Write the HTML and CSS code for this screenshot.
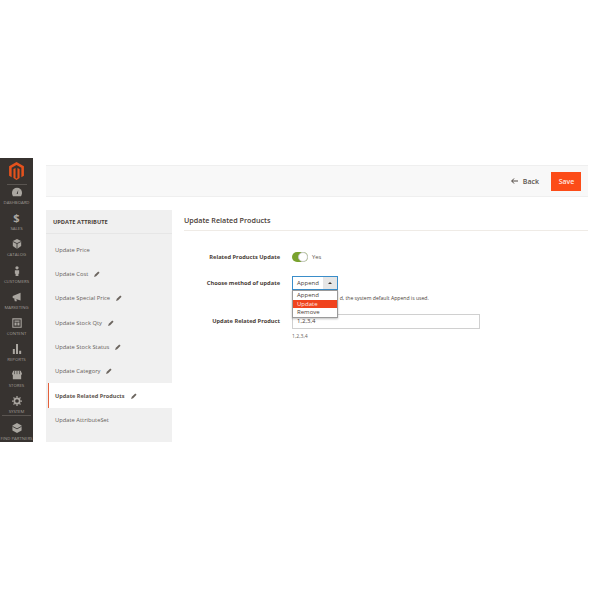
FILE: index.html
```html
<!DOCTYPE html>
<html lang="en">
<head>
<meta charset="utf-8">
<title>Update Related Products</title>
<link rel="stylesheet" href="styles.css">
</head>
<body>
<div class="app">
  <nav class="rail">
    <div class="logo"><svg width="15" height="18" viewBox="0 0 14 17"><path d="M7 0 L14 4 V13 L11.600 14.400 V5.400 L7 2.800 L2.400 5.400 V14.400 L0 13 V4 Z M6.100 5.600 V15 L7 15.600 L7.900 15 V5.600 L9.900 6.700 V15.200 L7 17 L4.100 15.200 V6.700 Z" fill="#e4521d"/></svg></div>
    <div class="rail-item first"><svg class="ri" viewBox="0 0 12 10"><path d="M6 0a6 6 0 0 0-6 6c0 1.500.5 3 1.200 4h9.600c.7-1 1.200-2.500 1.200-4a6 6 0 0 0-6-6z" fill="#aaa6a0"/><path d="M5.500 7 7.500 2.500 7 7.500z" fill="#33302e"/></svg><span>DASHBOARD</span></div>
    <div class="rail-item"><span class="glyph">$</span><span>SALES</span></div>
    <div class="rail-item"><svg class="ri" viewBox="0 0 12 12"><path d="M6 0 11 2.500 V8.500 L6 12 L1 8.500 V2.500Z" fill="#aaa6a0"/><path d="M1 3 6 5.500 11 3M6 5.500V12" stroke="#33302e" fill="none"/></svg><span>CATALOG</span></div>
    <div class="rail-item"><svg class="ri" viewBox="0 0 12 14"><circle cx="6" cy="2.500" r="2.300" fill="#aaa6a0"/><path d="M3 6h6v5H8v3H4v-3H3z" fill="#aaa6a0"/></svg><span>CUSTOMERS</span></div>
    <div class="rail-item"><svg class="ri" viewBox="0 0 14 12"><path d="M1 4.500 12 0V11L1 7.500z" fill="#aaa6a0"/><path d="M3 8h3l.8 4H4z" fill="#aaa6a0"/></svg><span>MARKETING</span></div>
    <div class="rail-item"><svg class="ri" viewBox="0 0 12 12"><path d="M1 1h10v10H1z" fill="none" stroke="#aaa6a0" stroke-width="1.300"/><path d="M3 3h6v1.500H3zM3 5.500h2.500V9H3zM6.500 5.500H9V9H6.500z" fill="#aaa6a0"/></svg><span>CONTENT</span></div>
    <div class="rail-item"><svg class="ri" viewBox="0 0 12 12"><path d="M1 6h2.400v6H1zM4.800 0h2.400v12H4.800zM8.600 8H11v4H8.600z" fill="#aaa6a0"/></svg><span>REPORTS</span></div>
    <div class="rail-item"><svg class="ri" viewBox="0 0 12 10"><path d="M1.500 0h9L12 3.500a1.500 1.500 0 0 1-1 1.400V10H1V4.900A1.500 1.500 0 0 1 0 3.500z" fill="#aaa6a0"/><path d="M3 0v4M6 0v4M9 0v4" stroke="#33302e" stroke-width=".7"/></svg><span>STORES</span></div>
    <div class="rail-item"><svg class="ri" viewBox="0 0 12 12"><circle cx="6" cy="6" r="3.200" fill="none" stroke="#aaa6a0" stroke-width="2"/><path d="M6 0v12M0 6h12M1.800 1.800l8.400 8.400M10.200 1.800l-8.400 8.400" stroke="#aaa6a0" stroke-width="1.500" stroke-dasharray="2 8"/></svg><span>SYSTEM</span></div>
    <div class="rail-item partners"><svg class="ri" viewBox="0 0 12 12"><path d="M6 0 11.500 3 V9 L6 12 L.5 9 V3Z" fill="#aaa6a0"/><path d="M.5 4 6 7l5.500-3" stroke="#33302e" fill="none"/></svg><span>FIND PARTNERS</span></div>
  </nav>
  <main class="main">
    <header class="actions">
      <span class="back"><svg width="7" height="6" viewBox="0 0 7 6"><path d="M3 .5.700 3 3 5.500M.7 3H7" fill="none" stroke="#514943" stroke-width="1"/></svg><span>Back</span></span>
      <button class="save">Save</button>
    </header>
    <div class="columns">
      <aside class="tabs">
        <h2 class="tabs-title">UPDATE ATTRIBUTE</h2>
        <ul class="tab-list">
          <li class="tab">Update Price</li>
          <li class="tab">Update Cost<svg class="pen" viewBox="0 0 7 7"><path d="M0 7 1 4.500 5 .5 6.500 2 2.500 6z" fill="#6b645e"/></svg></li>
          <li class="tab">Update Special Price<svg class="pen" viewBox="0 0 7 7"><path d="M0 7 1 4.500 5 .5 6.500 2 2.500 6z" fill="#6b645e"/></svg></li>
          <li class="tab">Update Stock Qty<svg class="pen" viewBox="0 0 7 7"><path d="M0 7 1 4.500 5 .5 6.500 2 2.500 6z" fill="#6b645e"/></svg></li>
          <li class="tab">Update Stock Status<svg class="pen" viewBox="0 0 7 7"><path d="M0 7 1 4.500 5 .5 6.500 2 2.500 6z" fill="#6b645e"/></svg></li>
          <li class="tab">Update Category<svg class="pen" viewBox="0 0 7 7"><path d="M0 7 1 4.500 5 .5 6.500 2 2.500 6z" fill="#6b645e"/></svg></li>
          <li class="tab active">Update Related Products<svg class="pen" viewBox="0 0 7 7"><path d="M0 7 1 4.500 5 .5 6.500 2 2.500 6z" fill="#6b645e"/></svg></li>
          <li class="tab">Update AttributeSet</li>
        </ul>
      </aside>
      <section class="content">
        <h1 class="section-title">Update Related Products</h1>
        <div class="field toggle-field">
          <label class="field-label">Related Products Update</label>
          <div class="field-control toggle-wrap"><span class="toggle"><span class="knob"></span></span><span class="yes">Yes</span></div>
        </div>
        <div class="field select-field">
          <label class="field-label">Choose method of update</label>
          <div class="field-control">
            <div class="select"><span class="select-value">Append</span><span class="select-btn"><span class="arrow"></span></span></div>
            <div class="dropdown">
              <div class="opt">Append</div>
              <div class="opt selected">Update</div>
              <div class="opt">Remove</div>
            </div>
            <p class="note"><span class="hidden-part">If no value is selecte</span>d, the system default Append is used.</p>
          </div>
        </div>
        <div class="field input-field">
          <label class="field-label">Update Related Product</label>
          <div class="field-control">
            <div class="input">1,2,3,4</div>
            <p class="note values">1,2,3,4</p>
          </div>
        </div>
      </section>
    </div>
  </main>
</div>
</body>
</html>
```
FILE: styles.css
```css
* { box-sizing: border-box; }
html, body { margin: 0; padding: 0; background: #fff; }
body { width: 600px; height: 600px; overflow: hidden; font-family: "Open Sans", sans-serif; color: #41362f; }
.app { display: flex; padding-top: 158px; height: 442px; }

.rail { width: 33px; height: 284px; flex: none; background: #373330; overflow: hidden; display: flex; flex-direction: column; align-items: center; }
.logo { height: 29px; width: 100%; padding-top: 4px; display: flex; justify-content: center; align-items: flex-start; position: relative; }
.logo::after { content: ""; position: absolute; left: 7px; right: 6px; bottom: 0; height: 1px; background: #5a5551; }
.rail-item { height: 26.100px; width: 100%; display: flex; flex-direction: column; align-items: center; justify-content: flex-end; color: #a09c96; font-size: 4.300px; line-height: 6px; white-space: nowrap; padding-bottom: 1px; flex: none; }
.rail-item.first { height: 21px; }
.rail-item.partners { border-top: 1px solid #5a5551; margin: 0 2px; width: 29px; height: 27px; }
.ri { width: 10px; height: 10px; margin-bottom: 2px; }
.glyph { font-size: 11px; line-height: 11px; font-weight: 700; color: #aaa6a0; margin-bottom: 2px; }

.main { width: 542px; margin-left: 13px; padding-top: 7px; flex: none; }
.actions { height: 32px; background: #f8f8f8; border-top: 1px solid #efefef; border-bottom: 1px solid #efefef; display: flex; align-items: center; justify-content: flex-end; padding-right: 7px; }
.back { display: flex; align-items: center; gap: 5px; font-size: 7px; font-weight: 600; color: #5c544e; margin-right: 12px; }
.save { width: 30px; height: 19px; border: 0; padding: 0 0 0 1px; background: #fc4c18; color: #ffe9e0; font: 600 7px "Open Sans", sans-serif; }

.columns { display: flex; margin-top: 13px; }
.tabs { width: 126px; height: 232px; flex: none; background: #f0f0f0; }
.tabs-title { margin: 0; height: 24px; padding: 0 0 0 7px; font-size: 5.700px; line-height: 24px; font-weight: 700; color: #4a4038; border-bottom: 1px solid #e6e6e6; }
.tab-list { list-style: none; margin: 0; padding: 0; }
.tab { height: 24.300px; padding-left: 9px; display: flex; align-items: center; font-size: 5.800px; color: #66605a; }
.tab:first-child { margin-top: 3.600px; }
.tab.active { background: #fff; font-weight: 700; font-size: 5.600px; color: #5c544e; margin-left: 2px; padding-left: 6px; border-left: 1px solid #e4613c; }
.pen { width: 6px; height: 6px; margin-left: 6px; }

.content { width: 404px; margin-left: 12px; }
.section-title { margin: 0; height: 21px; font-size: 7.200px; line-height: 20px; font-weight: 600; color: #4a4038; border-bottom: 1px solid #efebe6; }
.field { display: flex; position: relative; }
.field-label { width: 96px; text-align: right; font-size: 5.700px; font-weight: 700; color: #4a4038; flex: none; }
.field-control { margin-left: 12px; position: relative; }
.toggle-field { margin-top: 20px; height: 25px; line-height: 12px; }
.toggle-field .field-label { line-height: 12px; }
.toggle-wrap { display: flex; align-items: flex-start; gap: 4px; }
.toggle { width: 16px; height: 10px; border-radius: 5px; background: #79a22e; position: relative; margin-top: 1px; }
.knob { position: absolute; right: 0; top: 0; width: 10px; height: 10px; border-radius: 50%; background: #fff; border: 1px solid #c9c9c9; }
.yes { font-size: 5.800px; color: #5c544e; }
.select-field { height: 37px; }
.select-field .field-label { line-height: 14px; }
.select { width: 46px; height: 14px; border: 1px solid #3a8dc9; display: flex; background: #fff; }
.select-value { flex: 1; font-size: 6px; line-height: 13px; padding-left: 4px; color: #4a4038; }
.select-btn { width: 14px; background: #e6e6e6; display: flex; align-items: center; justify-content: center; }
.arrow { width: 0; height: 0; border-left: 2px solid transparent; border-right: 2px solid transparent; border-bottom: 2.500px solid #41362f; }
.dropdown { position: absolute; left: 0; top: 14px; width: 46px; height: 28px; background: #fff; border: 1px solid #9a9a9a; box-shadow: 0 1px 2px rgba(0,0,0,.25); z-index: 2; }
.opt { height: 8.700px; font-size: 6px; line-height: 8.700px; padding-left: 4px; color: #4a4038; }
.opt.selected { background: #f0431e; color: #ffe9e0; }
.note { margin: 0; font-size: 5.120px; line-height: 7px; color: #4a4038; white-space: nowrap; }
.select-field .note { margin-top: 5px; }
.hidden-part { visibility: hidden; }
.input-field { margin-top: 1px; }
.input-field .field-label { line-height: 14px; }
.input { width: 188px; height: 15px; border: 1px solid #d0d0d0; font-size: 6px; line-height: 13px; padding-left: 4px; color: #4a4038; }
.values { margin-top: 4px; color: #6b6560; }
```
